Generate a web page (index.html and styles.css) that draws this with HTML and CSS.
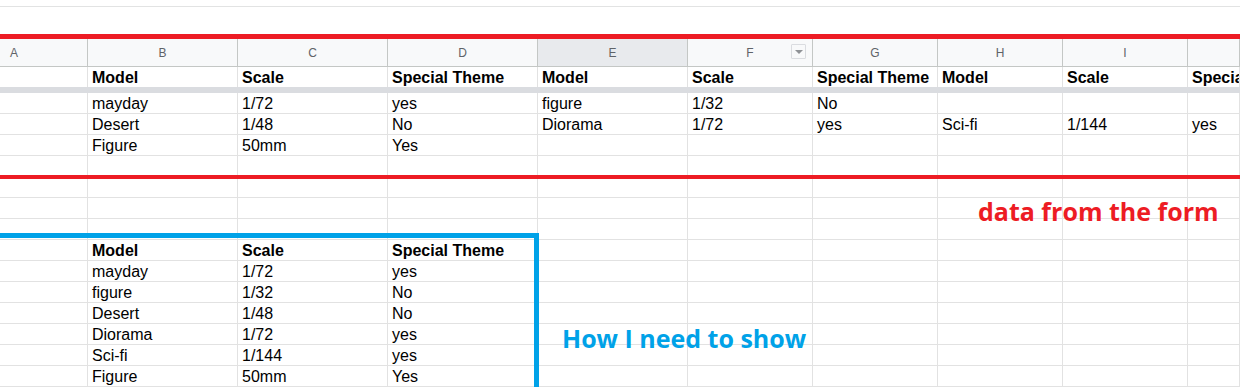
FILE: index.html
```html
<!DOCTYPE html>
<html>
<head>
<meta charset="utf-8">
<link rel="stylesheet" href="styles.css">
</head>
<body>
<div class="sheet">
  <div class="topbar"><div class="topline"></div></div>

  <div class="grid colheads">
    <div class="ch ch-a">A</div>
    <div class="ch">B</div>
    <div class="ch">C</div>
    <div class="ch">D</div>
    <div class="ch ch-sel">E</div>
    <div class="ch ch-filter">F<span class="filter-btn"><span class="tri"></span></span></div>
    <div class="ch">G</div>
    <div class="ch">H</div>
    <div class="ch">I</div>
    <div class="ch"></div>
  </div>

  <div class="grid row row-frozen">
    <div class="c"></div>
    <div class="c b">Model</div>
    <div class="c b">Scale</div>
    <div class="c b">Special Theme</div>
    <div class="c b">Model</div>
    <div class="c b">Scale</div>
    <div class="c b">Special Theme</div>
    <div class="c b">Model</div>
    <div class="c b">Scale</div>
    <div class="c b">Special Theme</div>
  </div>
  <div class="freeze"></div>

  <div class="grid row">
    <div class="c"></div><div class="c">mayday</div><div class="c">1/72</div><div class="c">yes</div>
    <div class="c">figure</div><div class="c">1/32</div><div class="c">No</div>
    <div class="c"></div><div class="c"></div><div class="c"></div>
  </div>
  <div class="grid row">
    <div class="c"></div><div class="c">Desert</div><div class="c">1/48</div><div class="c">No</div>
    <div class="c">Diorama</div><div class="c">1/72</div><div class="c">yes</div>
    <div class="c">Sci-fi</div><div class="c">1/144</div><div class="c">yes</div>
  </div>
  <div class="grid row">
    <div class="c"></div><div class="c">Figure</div><div class="c">50mm</div><div class="c">Yes</div>
    <div class="c"></div><div class="c"></div><div class="c"></div>
    <div class="c"></div><div class="c"></div><div class="c"></div>
  </div>
  <div class="grid row">
    <div class="c"></div><div class="c"></div><div class="c"></div><div class="c"></div>
    <div class="c"></div><div class="c"></div><div class="c"></div>
    <div class="c"></div><div class="c"></div><div class="c"></div>
  </div>
  <div class="grid row">
    <div class="c"></div><div class="c"></div><div class="c"></div><div class="c"></div>
    <div class="c"></div><div class="c"></div><div class="c"></div>
    <div class="c"></div><div class="c"></div><div class="c"></div>
  </div>
  <div class="grid row">
    <div class="c"></div><div class="c"></div><div class="c"></div><div class="c"></div>
    <div class="c"></div><div class="c"></div><div class="c"></div>
    <div class="c"></div><div class="c"></div><div class="c"></div>
  </div>
  <div class="grid row">
    <div class="c"></div><div class="c"></div><div class="c"></div><div class="c"></div>
    <div class="c"></div><div class="c"></div><div class="c"></div>
    <div class="c"></div><div class="c"></div><div class="c"></div>
  </div>
  <div class="grid row">
    <div class="c"></div><div class="c b">Model</div><div class="c b">Scale</div><div class="c b">Special Theme</div>
    <div class="c"></div><div class="c"></div><div class="c"></div>
    <div class="c"></div><div class="c"></div><div class="c"></div>
  </div>
  <div class="grid row">
    <div class="c"></div><div class="c">mayday</div><div class="c">1/72</div><div class="c">yes</div>
    <div class="c"></div><div class="c"></div><div class="c"></div>
    <div class="c"></div><div class="c"></div><div class="c"></div>
  </div>
  <div class="grid row">
    <div class="c"></div><div class="c">figure</div><div class="c">1/32</div><div class="c">No</div>
    <div class="c"></div><div class="c"></div><div class="c"></div>
    <div class="c"></div><div class="c"></div><div class="c"></div>
  </div>
  <div class="grid row">
    <div class="c"></div><div class="c">Desert</div><div class="c">1/48</div><div class="c">No</div>
    <div class="c"></div><div class="c"></div><div class="c"></div>
    <div class="c"></div><div class="c"></div><div class="c"></div>
  </div>
  <div class="grid row">
    <div class="c"></div><div class="c">Diorama</div><div class="c">1/72</div><div class="c">yes</div>
    <div class="c"></div><div class="c"></div><div class="c"></div>
    <div class="c"></div><div class="c"></div><div class="c"></div>
  </div>
  <div class="grid row">
    <div class="c"></div><div class="c">Sci-fi</div><div class="c">1/144</div><div class="c">yes</div>
    <div class="c"></div><div class="c"></div><div class="c"></div>
    <div class="c"></div><div class="c"></div><div class="c"></div>
  </div>
  <div class="grid row">
    <div class="c"></div><div class="c">Figure</div><div class="c">50mm</div><div class="c">Yes</div>
    <div class="c"></div><div class="c"></div><div class="c"></div>
    <div class="c"></div><div class="c"></div><div class="c"></div>
  </div>
  <div class="grid row">
    <div class="c"></div><div class="c"></div><div class="c"></div><div class="c"></div>
    <div class="c"></div><div class="c"></div><div class="c"></div>
    <div class="c"></div><div class="c"></div><div class="c"></div>
  </div>

  <div class="mark red-line red-top"></div>
  <div class="mark red-line red-bottom"></div>
  <div class="mark blue-box"></div>
  <div class="mark note note-red">data from the form</div>
  <div class="mark note note-blue">How I need to show</div>
</div>
</body>
</html>
```

FILE: styles.css
```css
html, body {
  margin: 0;
  padding: 0;
  background: #ffffff;
}

body {
  width: 1240px;
  height: 387px;
  overflow: hidden;
  font-family: "Liberation Sans", Arial, sans-serif;
}

.sheet {
  position: relative;
  width: 1240px;
  height: 387px;
  overflow: hidden;
}

.topbar {
  height: 34px;
  box-sizing: border-box;
  padding-top: 6px;
}

.topline {
  border-top: 1px solid #e2e3e3;
}

.grid {
  display: grid;
  grid-template-columns: 88px 150px 150px 150px 150px 125px 125px 125px 125px 1fr;
}

.colheads {
  height: 33px;
  box-sizing: border-box;
  border-bottom: 1px solid #c4c7c5;
  background: #f8f9fa;
}

.ch {
  position: relative;
  display: flex;
  align-items: center;
  justify-content: center;
  padding-top: 5px;
  box-sizing: border-box;
  border-right: 1px solid #c4c7c5;
  font-size: 12px;
  color: #5f6368;
}

.ch-a {
  justify-content: flex-start;
  padding-left: 10px;
}

.ch-sel {
  background: #e8eaed;
}

.filter-btn {
  position: absolute;
  left: 103px;
  top: 10px;
  width: 15px;
  height: 15px;
  box-sizing: border-box;
  border: 1px solid #dadce0;
  border-radius: 1px;
  display: flex;
  align-items: center;
  justify-content: center;
}

.tri {
  width: 0;
  height: 0;
  border-left: 4px solid transparent;
  border-right: 4px solid transparent;
  border-top: 4px solid #8f9296;
}

.row {
  height: 21px;
}

.row .c {
  border-bottom: 1px solid #e2e2e2;
}

.row-frozen {
  height: 20px;
}

.row-frozen .c {
  border-bottom: none;
}

.freeze {
  height: 6px;
  background: #dadce0;
}

.c {
  box-sizing: border-box;
  border-right: 1px solid #e2e2e2;
  display: flex;
  align-items: flex-end;
  padding-left: 4px;
  font-size: 16px;
  line-height: 18px;
  color: #000000;
  white-space: nowrap;
  overflow: hidden;
}

.c.b {
  font-weight: bold;
}

.mark {
  position: absolute;
}

.red-line {
  left: 0;
  right: 0;
  background: #ed1c24;
}

.red-top {
  top: 34px;
  height: 5px;
}

.red-bottom {
  top: 175px;
  height: 4px;
}

.blue-box {
  left: -10px;
  top: 233px;
  width: 549px;
  height: 200px;
  box-sizing: border-box;
  border-top: 5px solid #00a2e8;
  border-right: 5px solid #00a2e8;
}

.note {
  font-family: "Open Sans", sans-serif;
  font-weight: bold;
  font-size: 25px;
  line-height: 26px;
  white-space: nowrap;
}

.note-red {
  left: 978px;
  top: 198px;
  color: #ed1c24;
}

.note-blue {
  left: 562px;
  top: 325px;
  color: #00a2e8;
}
```
